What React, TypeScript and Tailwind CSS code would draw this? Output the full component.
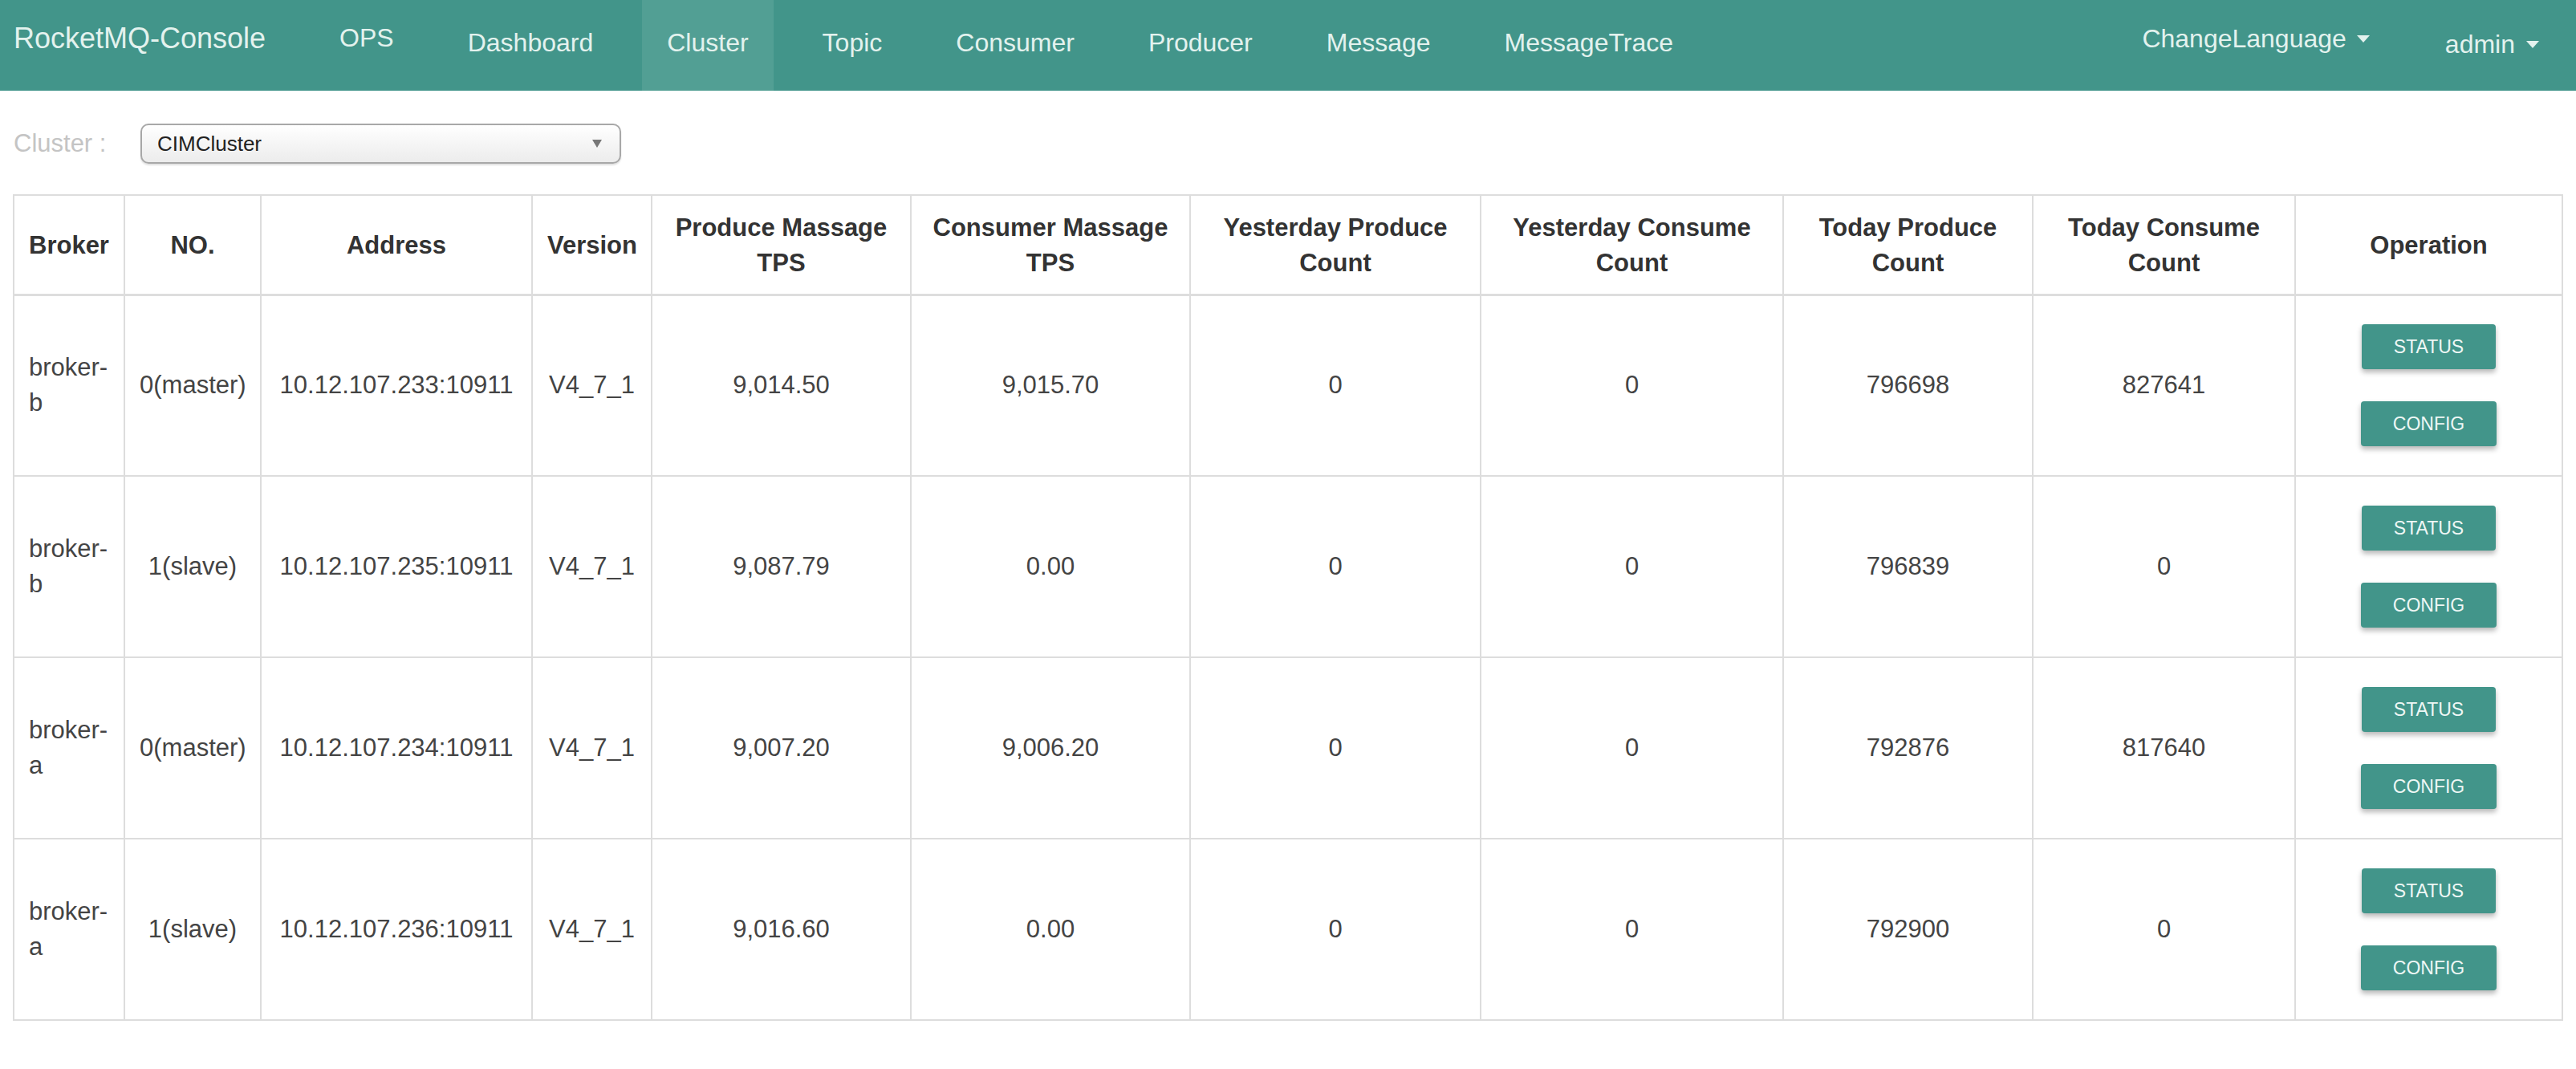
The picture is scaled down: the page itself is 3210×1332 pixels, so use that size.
import React from "react";

const navLinks = ["Dashboard", "Cluster", "Topic", "Consumer", "Producer", "Message", "MessageTrace"];

const columns = [
  { title: "Broker", width: 138, align: "left" },
  { title: "NO.", width: 170 },
  { title: "Address", width: 338 },
  { title: "Version", width: 149 },
  { title: "Produce Massage TPS", width: 323 },
  { title: "Consumer Massage TPS", width: 348 },
  { title: "Yesterday Produce Count", width: 362 },
  { title: "Yesterday Consume Count", width: 377 },
  { title: "Today Produce Count", width: 311 },
  { title: "Today Consume Count", width: 327 },
  { title: "Operation", width: 333 },
];

const brokers = [
  {
    broker: "broker-b",
    no: "0(master)",
    addr: "10.12.107.233:10911",
    version: "V4_7_1",
    produceTps: "9,014.50",
    consumeTps: "9,015.70",
    yProduce: "0",
    yConsume: "0",
    tProduce: "796698",
    tConsume: "827641",
  },
  {
    broker: "broker-b",
    no: "1(slave)",
    addr: "10.12.107.235:10911",
    version: "V4_7_1",
    produceTps: "9,087.79",
    consumeTps: "0.00",
    yProduce: "0",
    yConsume: "0",
    tProduce: "796839",
    tConsume: "0",
  },
  {
    broker: "broker-a",
    no: "0(master)",
    addr: "10.12.107.234:10911",
    version: "V4_7_1",
    produceTps: "9,007.20",
    consumeTps: "9,006.20",
    yProduce: "0",
    yConsume: "0",
    tProduce: "792876",
    tConsume: "817640",
  },
  {
    broker: "broker-a",
    no: "1(slave)",
    addr: "10.12.107.236:10911",
    version: "V4_7_1",
    produceTps: "9,016.60",
    consumeTps: "0.00",
    yProduce: "0",
    yConsume: "0",
    tProduce: "792900",
    tConsume: "0",
  },
];

const Caret = () => (
  <span className="inline-block w-0 h-0 border-l-[8px] border-r-[8px] border-t-[9px] border-l-transparent border-r-transparent border-t-[#e3f2ee]" />
);

const OpButton = ({ label }: { label: string }) => (
  <button
    type="button"
    className="h-[56px] px-[40px] rounded-[4px] bg-[#42958a] text-[#eef7f5] text-[23px] leading-none shadow-[0_4px_6px_rgba(0,0,0,0.28)]"
  >
    {label}
  </button>
);

export default function App() {
  return (
    <div className="min-h-screen bg-white font-['Liberation_Sans',Arial,sans-serif] text-[#333]">
      {/* navbar */}
      <nav className="flex h-[113px] bg-[#42958a] text-[#e3f2ee]">
        <div className="pl-[17px] pr-[31px] pt-[26px] text-[36px] leading-[44px] whitespace-nowrap">
          RocketMQ-Console
        </div>
        <ul className="flex gap-[30px] ml-[30px]">
          <li className="px-[31px] pt-[25px] text-[32px] leading-[44px]">OPS</li>
          {navLinks.map((link) => (
            <li
              key={link}
              className={
                "px-[31px] pt-[31px] text-[32px] leading-[44px] whitespace-nowrap " +
                (link === "Cluster" ? "bg-[#529f94]" : "")
              }
            >
              {link}
            </li>
          ))}
        </ul>
        <ul className="flex ml-auto gap-[94px] pr-[46px]">
          <li className="flex items-center gap-[13px] pt-[26px] self-start text-[32px] leading-[44px]">
            ChangeLanguage <Caret />
          </li>
          <li className="flex items-center gap-[14px] pt-[33px] self-start text-[32px] leading-[44px]">
            admin <Caret />
          </li>
        </ul>
      </nav>

      <div className="px-[16px]">
        {/* cluster selector */}
        <div className="flex items-center mt-[41px] pl-[1px]">
          <label className="w-[158px] text-[31px] text-[#c4c4c4]">Cluster :</label>
          <div className="flex items-center justify-between w-[599px] h-[50px] pl-[19px] pr-[22px] rounded-[10px] border-[2px] border-[#a8a8a8] bg-gradient-to-b from-white to-[#ececec] shadow-[0_2px_2px_rgba(0,0,0,0.12)]">
            <span className="text-[26px] text-[#222]">CIMCluster</span>
            <span className="inline-block w-0 h-0 border-l-[6px] border-r-[6px] border-t-[10px] border-l-transparent border-r-transparent border-t-[#777]" />
          </div>
        </div>

        {/* broker table */}
        <table className="mt-[38px] w-full table-fixed border-collapse border-[2px] border-[#dddddd] text-[31px]">
          <colgroup>
            {columns.map((c) => (
              <col key={c.title} style={{ width: c.width }} />
            ))}
          </colgroup>
          <thead>
            <tr className="h-[124px]">
              {columns.map((c) => (
                <th
                  key={c.title}
                  className={
                    "px-[18px] pt-[2px] border-[2px] border-b-[3px] border-[#dddddd] font-bold leading-[44px] text-[#333] align-middle " +
                    (c.align === "left" ? "text-left" : "text-center")
                  }
                >
                  {c.title}
                </th>
              ))}
            </tr>
          </thead>
          <tbody>
            {brokers.map((b, i) => (
              <tr key={i} className="h-[226px]">
                <td className="px-[18px] border-[2px] border-[#dddddd] text-left leading-[44px] text-[#444]">
                  {b.broker}
                </td>
                {[b.no, b.addr, b.version, b.produceTps, b.consumeTps, b.yProduce, b.yConsume, b.tProduce, b.tConsume].map(
                  (v, j) => (
                    <td
                      key={j}
                      className="px-[18px] border-[2px] border-[#dddddd] text-center leading-[44px] text-[#444] whitespace-nowrap"
                    >
                      {v}
                    </td>
                  )
                )}
                <td className="border-[2px] border-[#dddddd]">
                  <div className="flex flex-col items-center gap-[40px]">
                    <OpButton label="STATUS" />
                    <OpButton label="CONFIG" />
                  </div>
                </td>
              </tr>
            ))}
          </tbody>
        </table>
      </div>
    </div>
  );
}
